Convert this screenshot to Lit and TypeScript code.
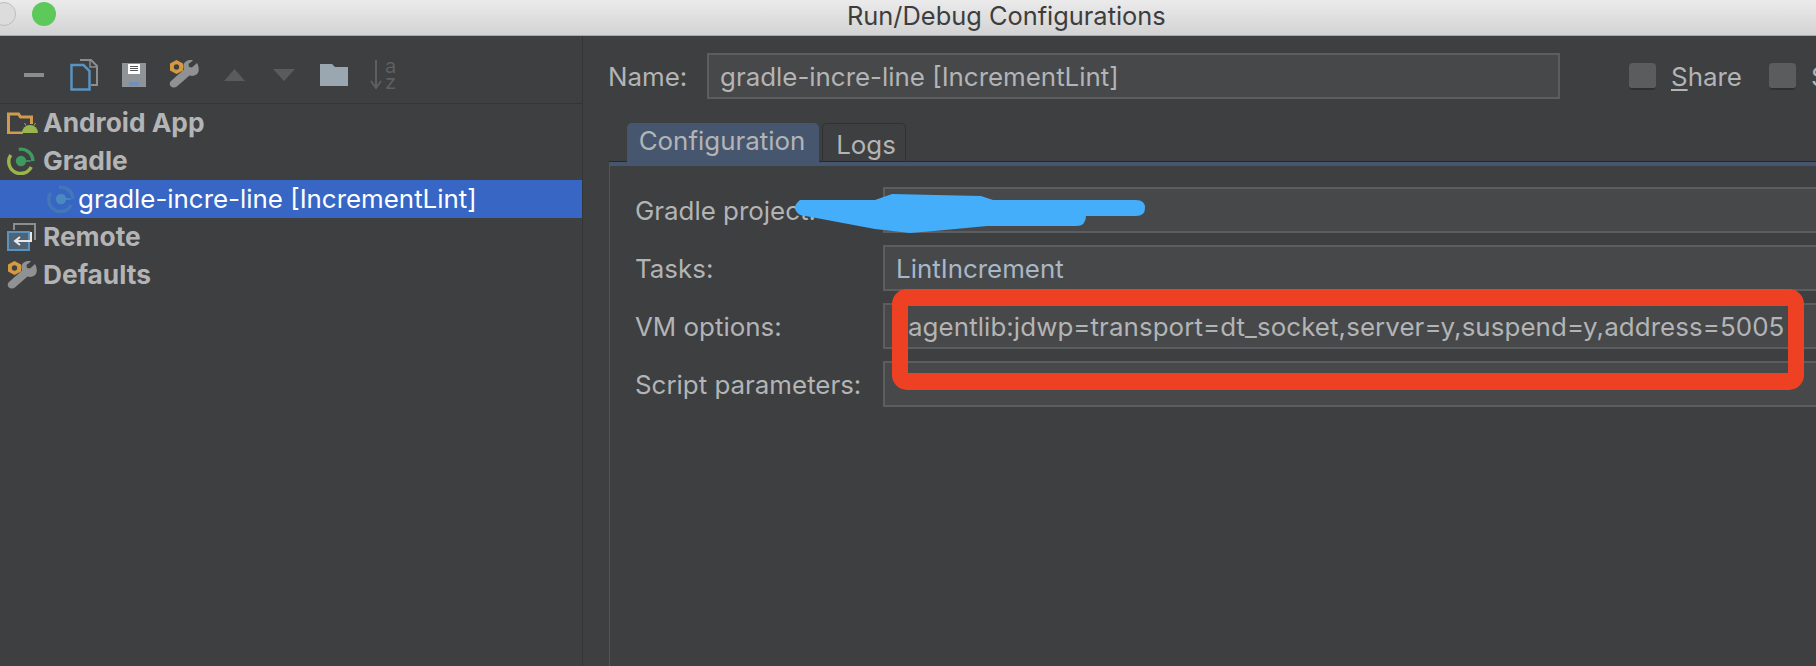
import { LitElement, html, css } from "lit";
import { customElement } from "lit/decorators.js";

const wrench = (w: number, h: number) => html`<svg width=${w} height=${h} viewBox="0 0 30 29" preserveAspectRatio="none">
  <path d="M28 3 23 7.500l-3-.5-.5-3L24 .5C20.500-.8 15.500 1 14.500 5c-.4 1.800 0 3.200.5 4.500L2 21c-1.700 1.500-1.700 3.800-.3 5.300 1.700 1.700 4.500 1.700 6.200.2L20.500 15.500c4 1.200 8-.3 9-4 .6-2.500.1-6-1.500-8.500Z" fill="#8f9192"/>
  <path d="M7.500 0 14 3.500v7L7.500 14 1 10.500v-7Z" fill="#d59a3f"/>
  <circle cx="7.500" cy="7" r="2.700" fill="#3e3f41"/>
</svg>`;

const gradleIcon = (ring: string, arc: string, dot: string) => html`<svg width="28" height="28" viewBox="0 0 26 26">
  <path d="M3.500 7.500A11 11 0 1 0 22.500 18.500" fill="none" stroke=${ring} stroke-width="3.200"/>
  <path d="M11 2.200A11 11 0 0 1 24 13" fill="none" stroke=${arc} stroke-width="3.200"/>
  <path d="M13 13H22" fill="none" stroke=${dot} stroke-width="1.500"/>
  <circle cx="13" cy="13" r="4.800" fill=${dot}/>
</svg>`;

@customElement("app-root")
export class AppRoot extends LitElement {
  static styles = css`
    :host {
      display: block;
      width: 1816px;
      height: 666px;
      overflow: hidden;
      position: relative;
      background: #3e3f41;
      font-family: "Inter", "Liberation Sans", sans-serif;
      color: #b3b4b5;
    }
    .titlebar {
      height: 35px;
      border-bottom: 1px solid #a9a9a9;
      background: linear-gradient(#ebebeb, #d3d3d3);
      display: flex;
      align-items: center;
      overflow: hidden;
    }
    .light {
      width: 24px;
      height: 24px;
      border-radius: 50%;
      flex: none;
      margin-bottom: 7px;
    }
    .light.gray {
      margin-left: -8px;
      background: #dcdcdc;
      border: 1px solid #bdbdbd;
      box-sizing: border-box;
    }
    .light.green {
      margin-left: 16px;
      background: #5cc95a;
    }
    .title {
      margin-left: 791px;
      padding-bottom: 5px;
      font-size: 25.400px;
      color: #3d3d3d;
      white-space: nowrap;
    }
    .body {
      display: flex;
      height: 630px;
    }
    .side {
      width: 583px;
      flex: none;
      box-sizing: border-box;
      border-right: 1px solid #343537;
    }
    .toolbar {
      height: 68px;
      box-sizing: border-box;
      border-bottom: 1px solid #343537;
      display: flex;
      align-items: center;
      padding: 10px 0 0 24px;
    }
    .toolbar svg {
      flex: none;
      display: block;
      overflow: visible;
    }
    .tool-copy { margin-left: 26px; }
    .tool-save { margin-left: 24px; }
    .tool-wrench { margin-left: 23px; display: flex; }
    .tool-up { margin-left: 25px; }
    .tool-down { margin-left: 28px; }
    .tool-folder { margin-left: 25px; }
    .tool-sort { margin-left: 22px; }
    .row {
      height: 38px;
      box-sizing: border-box;
      padding-bottom: 2px;
      display: flex;
      align-items: center;
      font-size: 26.300px;
      font-weight: 700;
      white-space: nowrap;
      padding-left: 7px;
    }
    .row svg {
      flex: none;
      display: block;
    }
    .row .ic {
      width: 36px;
      flex: none;
      display: flex;
      align-items: center;
      margin-top: 2px;
    }
    .row.sel {
      background: #3766c4;
      color: #ffffff;
      font-weight: 400;
      font-size: 25.900px;
      padding-left: 47px;
    }
    .row.sel .ic {
      width: 31px;
    }
    .main {
      flex: 1;
      min-width: 0;
      padding: 17px 0 0 26px;
      font-size: 25.900px;
    }
    .name {
      display: flex;
      align-items: center;
      height: 46px;
    }
    .name label {
      width: 98px;
      flex: none;
      margin-left: -1px;
      padding-right: 1px;
    }
    .input {
      height: 46px;
      box-sizing: border-box;
      border: 2px solid #5c5d5e;
      background: #47484a;
      display: flex;
      align-items: center;
      padding-left: 11px;
      white-space: nowrap;
      overflow: hidden;
    }
    .name .input {
      width: 853px;
      flex: none;
    }
    .check {
      width: 27px;
      height: 27px;
      flex: none;
      box-sizing: border-box;
      border-radius: 4px;
      background: #5b5c5d;
      border-bottom: 2px solid #2f3032;
    }
    .check.a {
      margin-left: 69px;
    }
    .check.b {
      margin-left: 27px;
    }
    .opt {
      margin-left: 15px;
      flex: none;
    }
    .opt u {
      text-underline-offset: 3px;
    }
    .tabs {
      display: flex;
      margin: 24px 0 0 18px;
      height: 39px;
      align-items: flex-end;
    }
    .tab {
      box-sizing: border-box;
      height: 39px;
      border-radius: 5px 5px 0 0;
      display: flex;
      align-items: center;
      justify-content: center;
    }
    .tab.on {
      width: 192px;
      background: #47566f;
      padding: 0 2px 4px 0;
    }
    .tab.off {
      width: 84px;
      margin-left: 3px;
      border: 1px solid #303133;
      border-bottom: 0;
      padding: 2px 0 0 4px;
    }
    .panel {
      border-top: 4px solid #47566f;
      box-shadow: 0 -1px 0 #26282b;
      border-left: 1px solid #47566f;
      height: 505px;
      box-sizing: border-box;
      padding: 21px 0 0 25px;
      display: grid;
      grid-template-columns: 248px 1000px;
      grid-auto-rows: 46px;
      row-gap: 12px;
      align-items: center;
    }
    .blue {
      color: #a9b7c6;
    }
    .vm {
      padding-left: 23px;
      letter-spacing: 0.080px;
    }
    .scribble {
      position: absolute;
      left: 785px;
      top: 190px;
    }
    .frame {
      position: absolute;
      left: 892px;
      top: 289px;
      width: 912px;
      height: 101px;
      box-sizing: border-box;
      border: solid #ee4124;
      border-width: 17px 16px;
      border-radius: 15px;
    }
  `;

  render() {
    return html`
      <div class="titlebar">
        <div class="light gray"></div>
        <div class="light green"></div>
        <div class="title">Run/Debug Configurations</div>
      </div>
      <div class="body">
        <div class="side">
          <div class="toolbar">
            <svg width="20" height="4" viewBox="0 0 20 4"><rect width="20" height="4" fill="#8c8d8e"/></svg>
            <svg class="tool-copy" width="28" height="32" viewBox="0 0 28 32">
              <path d="M10 1h11l6 6v19h-6" fill="none" stroke="#8c8d8e" stroke-width="2"/>
              <path d="M20 1v7h7" fill="none" stroke="#8c8d8e" stroke-width="1.500"/>
              <path d="M1.500 6h12l6 6v18.500h-18Z" fill="#3e3f41" stroke="#5a93bf" stroke-width="2.500"/>
            </svg>
            <svg class="tool-save" width="24" height="24" viewBox="0 0 24 24">
              <path d="M0 0h24v24H0Z" fill="#8f9498"/>
              <rect x="6" y="1" width="12" height="10" fill="#ffffff"/>
              <path d="M8 3.500h8M8 5.500h8M8 7.500h8" stroke="#555" stroke-width="1"/>
              <rect x="7" y="19" width="10" height="4" fill="#6e8fc0"/>
            </svg>
            <span class="tool-wrench">${wrench(30, 29)}</span>
            <svg class="tool-up" width="21" height="12" viewBox="0 0 21 12"><path d="M10.500 0 21 12H0Z" fill="#5a5c5c"/></svg>
            <svg class="tool-down" width="22" height="12" viewBox="0 0 22 12"><path d="M0 0h22L11 12Z" fill="#5a5c5c"/></svg>
            <svg class="tool-folder" width="28" height="22" viewBox="0 0 28 22"><path d="M0 0h12l3 3h13v19H0Z" fill="#9aa7b0"/></svg>
            <svg class="tool-sort" width="27" height="30" viewBox="0 0 27 30">
              <path d="M6 0v27M1 21l5 7 5-7" fill="none" stroke="#5d5f60" stroke-width="2"/>
              <text x="15" y="13" font-size="20" fill="#5d5f60" font-family="Inter, sans-serif">a</text>
              <text x="15" y="29" font-size="20" fill="#5d5f60" font-family="Inter, sans-serif">z</text>
            </svg>
          </div>
          <div class="row">
            <span class="ic"><svg width="31" height="22" viewBox="0 0 31 22">
              <path d="M1.500 20.500V2h10l2 3h11v7" fill="none" stroke="#d09b4d" stroke-width="3"/>
              <path d="M0 19.500h16V22H0Z" fill="#d09b4d"/>
              <path d="M15 21a8 8 0 0 1 16 0Z" fill="#9ab54e"/>
              <path d="M19 13.500 17.500 11M27 13.500l1.500-2.500" stroke="#9ab54e" stroke-width="1"/>
            </svg></span>Android App
          </div>
          <div class="row">
            <span class="ic">${gradleIcon("#9ab54e", "#3f9a5f", "#3f9a5f")}</span>Gradle
          </div>
          <div class="row sel">
            <span class="ic">${gradleIcon("#4377b8", "#4377b8", "#4a8abf")}</span>gradle-incre-line [IncrementLint]
          </div>
          <div class="row">
            <span class="ic"><svg width="29" height="28" viewBox="0 0 29 28">
              <path d="M7 7V1h21v16" fill="none" stroke="#8c8d8e" stroke-width="2"/>
              <rect x="1" y="9" width="21" height="18" fill="#4f6374" stroke="#5a93bf" stroke-width="2"/>
              <path d="M24 9v9H9M13 14l-5 4 5 4" fill="none" stroke="#e8e8e8" stroke-width="2"/>
            </svg></span>Remote
          </div>
          <div class="row">
            <span class="ic">${wrench(30, 29)}</span>Defaults
          </div>
        </div>
        <div class="main">
          <div class="name">
            <label>Name:</label>
            <div class="input">gradle-incre-line [IncrementLint]</div>
            <div class="check a"></div>
            <span class="opt"><u>S</u>hare</span>
            <div class="check b"></div>
            <span class="opt">S</span>
          </div>
          <div class="tabs">
            <div class="tab on">Configuration</div>
            <div class="tab off">Logs</div>
          </div>
          <div class="panel">
            <span>Gradle project:</span>
            <div class="input"></div>
            <span>Tasks:</span>
            <div class="input blue">LintIncrement</div>
            <span>VM options:</span>
            <div class="input vm">agentlib:jdwp=transport=dt_socket,server=y,suspend=y,address=5005</div>
            <span>Script parameters:</span>
            <div class="input"></div>
          </div>
        </div>
      </div>
      <svg class="scribble" width="370" height="48" viewBox="785 190 370 48">
        <path d="M800 200L875 200L892 194L981 196L993 200L1136 200Q1145 200 1145 208Q1145 216 1136 216L1086 216Q1086 226 1076 226L987 226L934 231L910 233L875 229L827 220L800 215Q790 208 800 200Z" fill="#45aefb"/>
      </svg>
      <div class="frame"></div>
    `;
  }
}
